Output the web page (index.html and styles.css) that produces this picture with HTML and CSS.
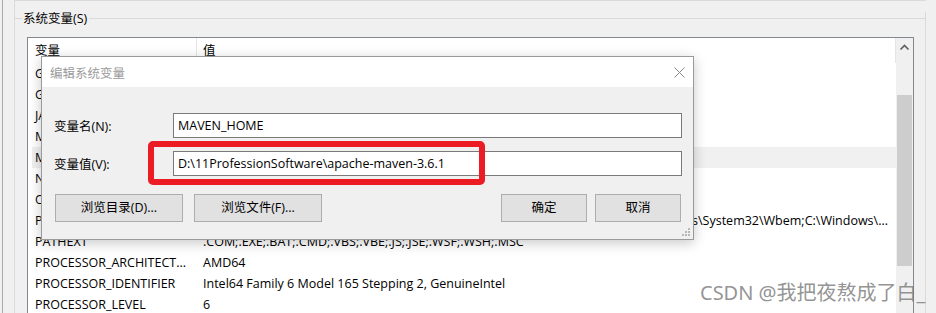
FILE: index.html
```html
<!DOCTYPE html>
<html lang="zh-CN">
<head>
<meta charset="utf-8">
<title>编辑系统变量</title>
<link rel="stylesheet" href="styles.css">
</head>
<body>
<div class="screen">
  <div class="strip"></div>
  <div class="panel">
    <div class="group">
      <div class="group-head"><span class="group-title">系统变量(S)</span></div>
      <div class="listbox">
        <div class="list">
          <div class="list-head">
            <div class="hcell hname">变量</div>
            <div class="hcell hvalue">值</div>
          </div>
          <div class="row"><div class="name">GOPATH</div><div class="value">%USERPROFILE%\go</div></div>
          <div class="row"><div class="name">GRADLE_HOME</div><div class="value">D:\11ProfessionSoftware\gradle-7.1</div></div>
          <div class="row"><div class="name">JAVA_HOME</div><div class="value">D:\11ProfessionSoftware\Java\jdk1.8.0_291</div></div>
          <div class="row"><div class="name">M2_HOME</div><div class="value">D:\11ProfessionSoftware\apache-maven-3.6.1</div></div>
          <div class="row sel"><div class="name">MAVEN_HOME</div><div class="value">D:\11ProfessionSoftware\apache-maven-3.6.1</div></div>
          <div class="row"><div class="name">NUMBER_OF_PROCESSORS</div><div class="value">16</div></div>
          <div class="row"><div class="name">OS</div><div class="value">Windows_NT</div></div>
          <div class="row"><div class="name">Path</div><div class="value tail"><span>C:\Program Files\Common Files\Oracle\Java\javapath;C:\Windows\system32;C:\Windows;C:\Windows\System32\Wbem;C:\Windows\...</span></div></div>
          <div class="row"><div class="name">PATHEXT</div><div class="value">.COM;.EXE;.BAT;.CMD;.VBS;.VBE;.JS;.JSE;.WSF;.WSH;.MSC</div></div>
          <div class="row"><div class="name">PROCESSOR_ARCHITECT...</div><div class="value">AMD64</div></div>
          <div class="row"><div class="name">PROCESSOR_IDENTIFIER</div><div class="value">Intel64 Family 6 Model 165 Stepping 2, GenuineIntel</div></div>
          <div class="row"><div class="name">PROCESSOR_LEVEL</div><div class="value">6</div></div>
        </div>
        <div class="scrollbar">
          <svg class="arrow" width="17" height="17" viewBox="0 0 17 17"><path d="M4.5 11.5 L8.5 7.5 L12.5 11.5" fill="none" stroke="#606060" stroke-width="1.7"/></svg>
          <div class="thumb"></div>
        </div>
      </div>
    </div>
  </div>

  <div class="dialog">
    <div class="titlebar">
      <span class="title">编辑系统变量</span>
      <svg class="close" width="11" height="11" viewBox="0 0 11 11"><path d="M0.5 0.5 L10.5 10.5 M10.5 0.5 L0.5 10.5" stroke="#8a8a8a" stroke-width="1"/></svg>
    </div>
    <div class="dbody">
      <div class="field"><span class="flabel">变量名(N):</span><div class="input">MAVEN_HOME</div></div>
      <div class="field"><span class="flabel">变量值(V):</span><div class="input">D:\11ProfessionSoftware\apache-maven-3.6.1</div></div>
      <div class="buttons">
        <button class="btn">浏览目录(D)...</button>
        <button class="btn">浏览文件(F)...</button>
        <div class="spacer"></div>
        <div class="btn-pair">
          <button class="btn small">确定</button>
          <button class="btn small">取消</button>
        </div>
      </div>
    </div>
    <svg class="grip" width="9" height="9" viewBox="0 0 9 9" fill="#b8b8b8">
      <rect x="6" y="0" width="2" height="2"/>
      <rect x="3" y="3" width="2" height="2"/><rect x="6" y="3" width="2" height="2"/>
      <rect x="0" y="6" width="2" height="2"/><rect x="3" y="6" width="2" height="2"/><rect x="6" y="6" width="2" height="2"/>
    </svg>
  </div>

  <div class="mark"></div>
  <div class="watermark">CSDN @我把夜熬成了白_</div>
</div>
</body>
</html>
```
FILE: styles.css
```css
html, body {
  margin: 0;
  padding: 0;
  background: #f0f0f0;
}
body {
  font-family: "Open Sans", "Noto Sans CJK SC", sans-serif;
  font-size: 12.5px;
  color: #000;
}
.screen {
  position: relative;
  width: 936px;
  height: 313px;
  overflow: hidden;
  display: flex;
  background: #f0f0f0;
}
.strip {
  flex: none;
  width: 12px;
  margin-left: 2px;
  border-left: 1px solid #aaaaaa;
  box-sizing: border-box;
}
.panel {
  flex: none;
  width: 912px;
  box-sizing: border-box;
  border-top: 1px solid #dadada;
  border-left: 1px solid #dadada;
}
.group {
  margin-top: 11px;
  border-right: 1px solid #dadada;
  height: 400px;
}
.group-head {
  display: flex;
  align-items: center;
  height: 13px;
}
.group-head::before {
  content: "";
  width: 7px;
  border-top: 1px solid #dadada;
}
.group-head::after {
  content: "";
  flex: 1;
  margin-left: 1px;
  border-top: 1px solid #dadada;
}
.group-title {
  padding: 0 1px;
  line-height: 13px;
  white-space: nowrap;
}
.listbox {
  margin: 12px 11px 0 12px;
  border: 1px solid #828790;
  background: #fff;
  display: flex;
  height: 320px;
}
.list {
  flex: 1;
  min-width: 0;
}
.list-head {
  display: flex;
  height: 25px;
  line-height: 25px;
  border-right: 1px solid #e5e5e5;
}
.hname {
  width: 169px;
  box-sizing: border-box;
  padding-left: 7px;
  border-right: 1px solid #e5e5e5;
}
.hvalue {
  padding-left: 6px;
}
.row {
  display: flex;
  height: 21px;
  line-height: 21px;
  margin-left: 4px;
  white-space: nowrap;
}
.row.sel {
  background: #f0f0f0;
}
.row .name {
  width: 164px;
  flex: none;
  box-sizing: border-box;
  padding-left: 3px;
  overflow: hidden;
}
.row .value {
  flex: 1;
  min-width: 0;
  padding: 0 8px 0 7px;
  overflow: hidden;
}
.row .value.tail {
  display: flex;
  justify-content: flex-end;
}
.row .value.tail span {
  flex: none;
}
.scrollbar {
  width: 17px;
  flex: none;
  background: #f0f0f0;
  display: flex;
  flex-direction: column;
  align-items: center;
}
.arrow {
  display: block;
  flex: none;
}
.thumb {
  margin-top: 40px;
  width: 15px;
  height: 171px;
  background: #cdcdcd;
}

.dialog {
  position: absolute;
  left: 41px;
  top: 56px;
  width: 653px;
  height: 184px;
  box-sizing: border-box;
  border: 1px solid #9a9a9a;
  background: #f0f0f0;
  box-shadow: 0 3px 12px rgba(0, 0, 0, 0.22);
}
.titlebar {
  height: 30px;
  background: #fff;
  display: flex;
  align-items: center;
  justify-content: space-between;
  padding: 0 8px 0 8px;
}
.title {
  color: #9a9a9a;
}
.close {
  display: block;
}
.dbody {
  padding: 26px 11px 0 12px;
  display: flex;
  flex-direction: column;
  gap: 13px;
}
.field {
  display: flex;
  align-items: center;
  height: 25px;
}
.flabel {
  width: 119px;
  flex: none;
  white-space: nowrap;
}
.input {
  flex: 1;
  height: 25px;
  box-sizing: border-box;
  border: 1px solid #7a7a7a;
  background: #fff;
  padding-left: 4px;
  line-height: 23px;
  white-space: nowrap;
}
.buttons {
  display: flex;
  gap: 11px;
  margin-top: 5px;
  padding: 0 1px;
}
.spacer {
  flex: 1;
}
.btn-pair {
  display: flex;
  gap: 8px;
}
.btn {
  width: 128px;
  height: 28px;
  box-sizing: border-box;
  border: 1px solid #adadad;
  background: #e1e1e1;
  font: inherit;
  line-height: 26px;
  color: #000;
  padding: 0;
  margin: 0;
}
.btn.small {
  width: 86px;
}
.grip {
  position: absolute;
  right: 2px;
  bottom: 2px;
}
.mark {
  position: absolute;
  left: 148px;
  top: 141px;
  width: 337px;
  height: 44px;
  box-sizing: border-box;
  border: 6px solid #ec1c24;
  border-radius: 5px;
}
.watermark {
  position: absolute;
  left: 700px;
  top: 279px;
  font-family: "Noto Sans", "Noto Sans CJK SC", sans-serif;
  font-size: 20px;
  line-height: 28px;
  color: rgba(120, 120, 120, 0.8);
  white-space: nowrap;
}
```
